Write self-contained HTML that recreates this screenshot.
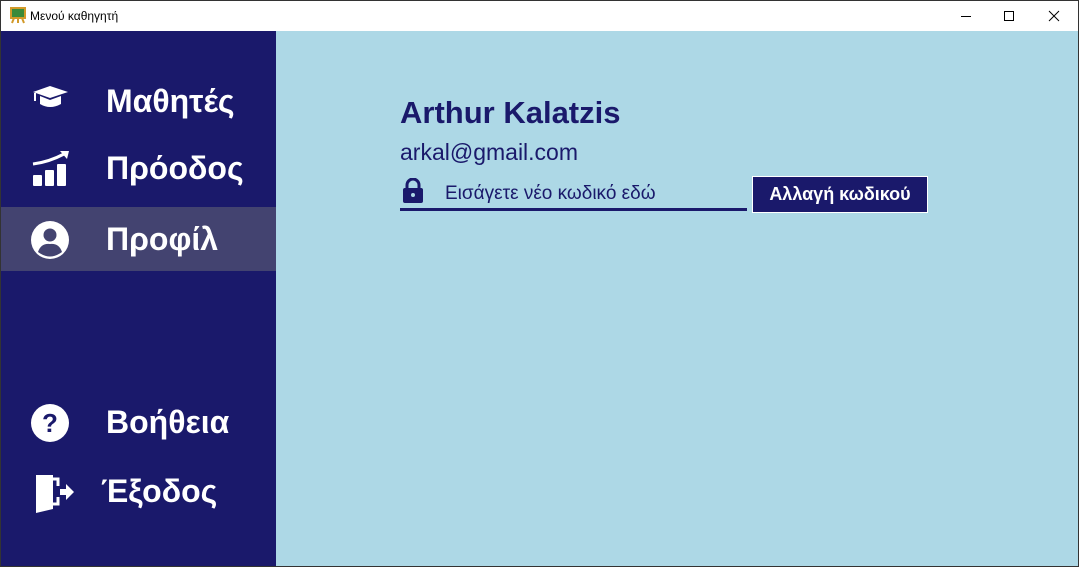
<!DOCTYPE html>
<html><head><meta charset="utf-8"><style>
*{margin:0;padding:0;box-sizing:border-box}
body{width:1079px;height:567px;overflow:hidden;background:#fff;font-family:"Liberation Sans","DejaVu Sans",sans-serif;position:relative}
.win{position:absolute;left:0;top:0;width:1079px;height:567px;border:1px solid #333}
.title{position:absolute;left:1px;top:1px;width:1077px;height:30px;background:#fff}
.title span{position:absolute;left:29px;top:8px;font-size:12px;color:#000}
.side{position:absolute;left:1px;top:31px;width:275px;height:535px;background:#1a196b}
.main{position:absolute;left:276px;top:31px;width:802px;height:535px;background:#add8e6}
.item{position:absolute;left:0;width:275px;height:64px;color:#fff;font-weight:bold;font-size:32px}
.item .t{position:absolute;left:105px;top:14px}
.item svg{position:absolute;left:30px;top:14px}
.sel{background:#434370}
</style></head><body>
<div class="win"></div>
<div class="title">
<svg style="position:absolute;left:9px;top:6px" width="16" height="17" viewBox="0 0 16 17"><rect x="1" y="1" width="14" height="10" fill="#3a8a3a" stroke="#d29a2a" stroke-width="2"/><path d="M4 11 L2 16 M12 11 L14 16 M8 11 V16" stroke="#d29a2a" stroke-width="2"/></svg>
<span>Μενού καθηγητή</span>
<svg style="position:absolute;left:955px;top:8px" width="110" height="14"><line x1="5" y1="7.5" x2="15" y2="7.5" stroke="#000"/><rect x="48.5" y="2.5" width="9" height="9" fill="none" stroke="#000"/><path d="M93 2 L103 12 M103 2 L93 12" stroke="#000"/></svg>
</div>
<div class="side">
<div class="item" style="top:38px"><svg width="40" height="30" viewBox="0 0 40 30"><path d="M2 9 L19 3 L37 9 L19 15 Z" fill="#fff"/><path d="M9 13 V21 Q19 27 30 21 V13 L19 17 Z" fill="#fff"/><path d="M4 10 V18" stroke="#fff" stroke-width="2"/></svg><span class="t">Μαθητές</span></div>
<div class="item" style="top:105px"><svg width="40" height="36" viewBox="0 0 40 36"><path d="M2 14 Q18 12 33 4" stroke="#fff" stroke-width="3" fill="none"/><path d="M29 1 L38 1 L36 9 Z" fill="#fff"/><rect x="2" y="25" width="9" height="11" rx="1" fill="#fff"/><rect x="14" y="20" width="9" height="16" rx="1" fill="#fff"/><rect x="26" y="14" width="9" height="22" rx="1" fill="#fff"/></svg><span class="t">Πρόοδος</span></div>
<div class="item sel" style="top:176px"><svg width="40" height="40" viewBox="0 0 40 40"><circle cx="19" cy="19" r="19" fill="#fff"/><circle cx="19" cy="14" r="6.5" fill="#434370"/><path d="M7 31 Q10 22 19 23 Q28 22 31 31 Q19 40 7 31Z" fill="#434370"/></svg><span class="t">Προφίλ</span></div>
<div class="item" style="top:359px"><svg width="40" height="40" viewBox="0 0 40 40"><circle cx="19" cy="19" r="19" fill="#fff"/><text x="19" y="28" text-anchor="middle" font-size="26" font-weight="bold" fill="#1a196b" font-family="Liberation Sans">?</text></svg><span class="t">Βοήθεια</span></div>
<div class="item" style="top:428px"><svg width="44" height="40" viewBox="0 0 44 40"><path d="M5 2 H22 V36 L5 40 Z" fill="#fff"/><path d="M22 6 H27 V13 M27 24 V31 H22" stroke="#fff" stroke-width="3" fill="none"/><path d="M29 16 H35 V11 L43 19 L35 27 V22 H29 Z" fill="#fff"/></svg><span class="t" style="left:100px">Έξοδος</span></div>
</div>
<div class="main">
<div style="position:absolute;left:124px;top:64px;font-size:31px;font-weight:bold;color:#1a196b">Arthur Kalatzis</div>
<div style="position:absolute;left:124px;top:108px;font-size:23px;color:#1a196b">arkal@gmail.com</div>
<svg style="position:absolute;left:126px;top:147px" width="22" height="26" viewBox="0 0 22 26"><path d="M5 11 V7 A6 6 0 0 1 17 7 V11" stroke="#1a196b" stroke-width="3" fill="none"/><rect x="1" y="10" width="20" height="15" rx="2" fill="#1a196b"/><circle cx="11" cy="17" r="2" fill="#add8e6"/></svg>
<div style="position:absolute;left:169px;top:152px;font-size:19px;color:#1a196b">Εισάγετε νέο κωδικό εδώ</div>
<div style="position:absolute;left:124px;top:177px;width:347px;height:3px;background:#1a196b"></div>
<div style="position:absolute;left:476px;top:145px;width:176px;height:37px;background:#1a196b;border:1px solid #fff;color:#fff;font-weight:bold;font-size:18px;text-align:center;line-height:35px">Αλλαγή κωδικού</div>
</div>
</body></html>
